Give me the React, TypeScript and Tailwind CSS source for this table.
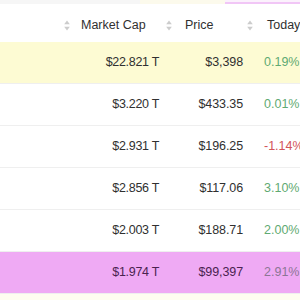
import React from "react";

type Row = { cap: string; price: string; today: string; tone: "g" | "r" | "m"; bg: "y" | "w" | "p" };

const rows: Row[] = [
  { cap: "$22.821 T", price: "$3,398", today: "0.19%", tone: "g", bg: "y" },
  { cap: "$3.220 T", price: "$433.35", today: "0.01%", tone: "g", bg: "w" },
  { cap: "$2.931 T", price: "$196.25", today: "-1.14%", tone: "r", bg: "w" },
  { cap: "$2.856 T", price: "$117.06", today: "3.10%", tone: "g", bg: "w" },
  { cap: "$2.003 T", price: "$188.71", today: "2.00%", tone: "g", bg: "w" },
  { cap: "$1.974 T", price: "$99,397", today: "2.91%", tone: "m", bg: "p" },
];

function SortIcon() {
  return (
    <svg width="6" height="11" viewBox="0 0 6 11" className="shrink-0">
      <path d="M3 0.5 L5.8 4.2 L0.2 4.2 Z" fill="#cccccc" />
      <path d="M3 10.5 L5.8 6.8 L0.2 6.8 Z" fill="#cccccc" />
    </svg>
  );
}

export default function App() {
  return (
    <div
      className="w-[300px] h-[300px] overflow-hidden bg-white text-[12.5px] text-[#303030]"
      style={{ fontFamily: "'Liberation Sans', Arial, sans-serif" }}
    >
      <div className="flex h-[4px]">
        <div className="w-[140px] bg-[#f6f6f6]" />
        <div className="w-[85px] bg-[#fcfaec]" />
        <div className="flex-1 bg-[#fbf1fc] border-b-2 border-[#f1c6f6]" />
      </div>
      <div className="grid grid-cols-[58px_105px_84px_1fr] h-[38px] pt-[5px] items-center bg-white">
        <div />
        <div className="flex items-center pl-[6px] gap-[11px]">
          <SortIcon />
          <span>Market Cap</span>
        </div>
        <div className="flex items-center pl-[3px] gap-[13px]">
          <SortIcon />
          <span>Price</span>
        </div>
        <div className="flex items-center pl-[0px] gap-[14px] whitespace-nowrap">
          <SortIcon />
          <span>Today</span>
        </div>
      </div>
      {rows.map((r, i) => {
        const bg = r.bg === "y" ? "bg-[#fdfbd3]" : r.bg === "p" ? "bg-[#efaaf4]" : "bg-white";
        const txt = r.bg === "p" ? "text-[#4a2350]" : "text-[#303030]";
        const tc = r.tone === "g" ? "text-[#5faa72]" : r.tone === "r" ? "text-[#d2555a]" : "text-[#8c7694]";
        return (
          <div
            key={i}
            className={`grid grid-cols-[58px_105px_84px_1fr] h-[42px] items-center border-b border-[#efefef] ${bg} ${txt}`}
          >
            <div />
            <div className="text-right pr-[4px] tracking-[-0.3px]">{r.cap}</div>
            <div className="text-right pr-[4px] tracking-[-0.1px]">{r.price}</div>
            <div className={`pl-[17px] whitespace-nowrap ${tc}`}>{r.today}</div>
          </div>
        );
      })}
      <div className="h-[10px] bg-[#fefdf0]" />
    </div>
  );
}
